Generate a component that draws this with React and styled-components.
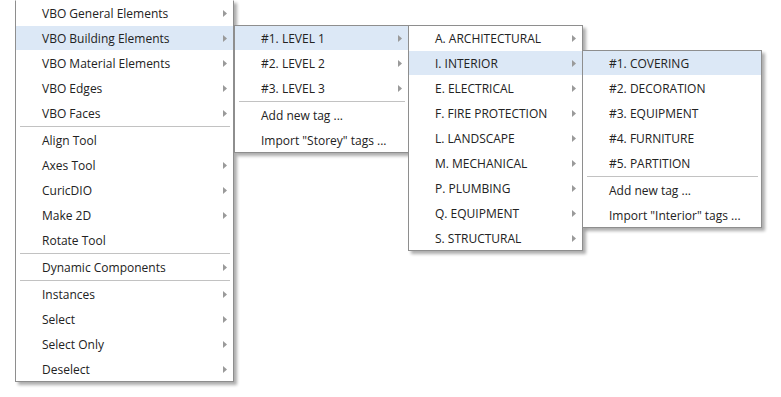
import React from "react";
import styled, { createGlobalStyle } from "styled-components";

const Global = createGlobalStyle`
  html, body { margin: 0; padding: 0; background: #ffffff; }
  body { font-family: "Open Sans", "Noto Sans", sans-serif; }
`;

const Stage = styled.div`
  position: relative;
  width: 781px;
  height: 397px;
  overflow: hidden;
  background: #ffffff;
`;

const Menu = styled.div`
  position: absolute;
  left: ${(p) => p.$left}px;
  top: ${(p) => p.$top}px;
  width: ${(p) => p.$width}px;
  box-sizing: border-box;
  display: flex;
  flex-direction: column;
  gap: 1px;
  background: #ffffff;
  border: 1px solid #8e8e8e;
  ${(p) => (p.$openTop ? "border-top-color: transparent;" : "")}
  box-shadow: 3px 3px 3px rgba(0, 0, 0, 0.32);
  z-index: ${(p) => p.$z};
`;

const Item = styled.div`
  height: 24px;
  display: flex;
  align-items: center;
  padding: 0 6px 0 26px;
  background: ${(p) => (p.$active ? "#dce8f6" : "transparent")};
  font-size: 12px;
  color: #222222;
  white-space: nowrap;
`;

const Label = styled.span`
  flex: 1;
`;

const Separator = styled.div`
  height: 1px;
  margin: 0 3px 0 4px;
  background: #c2c2c2;
`;

const Arrow = () => (
  <svg width="4" height="7" viewBox="0 0 4 7">
    <polygon points="0,0 4,3.5 0,7" fill="#9a9a9a" />
  </svg>
);

const MenuList = ({ items, ...rest }) => (
  <Menu {...rest}>
    {items.map((it, i) =>
      it === "-" ? (
        <Separator key={i} />
      ) : (
        <Item key={i} $active={it.active}>
          <Label>{it.label}</Label>
          {it.sub && <Arrow />}
        </Item>
      )
    )}
  </Menu>
);

const main = [
  { label: "VBO General Elements", sub: true },
  { label: "VBO Building Elements", sub: true, active: true },
  { label: "VBO Material Elements", sub: true },
  { label: "VBO Edges", sub: true },
  { label: "VBO Faces", sub: true },
  "-",
  { label: "Align Tool" },
  { label: "Axes Tool", sub: true },
  { label: "CuricDIO", sub: true },
  { label: "Make 2D", sub: true },
  { label: "Rotate Tool" },
  "-",
  { label: "Dynamic Components", sub: true },
  "-",
  { label: "Instances", sub: true },
  { label: "Select", sub: true },
  { label: "Select Only", sub: true },
  { label: "Deselect", sub: true },
];

const levels = [
  { label: "#1. LEVEL 1", sub: true, active: true },
  { label: "#2. LEVEL 2", sub: true },
  { label: "#3. LEVEL 3", sub: true },
  "-",
  { label: "Add new tag ..." },
  { label: 'Import "Storey" tags ...' },
];

const disciplines = [
  { label: "A. ARCHITECTURAL", sub: true },
  { label: "I. INTERIOR", sub: true, active: true },
  { label: "E. ELECTRICAL", sub: true },
  { label: "F. FIRE PROTECTION", sub: true },
  { label: "L. LANDSCAPE", sub: true },
  { label: "M. MECHANICAL", sub: true },
  { label: "P. PLUMBING", sub: true },
  { label: "Q. EQUIPMENT", sub: true },
  { label: "S. STRUCTURAL", sub: true },
];

const interior = [
  { label: "#1. COVERING", active: true },
  { label: "#2. DECORATION" },
  { label: "#3. EQUIPMENT" },
  { label: "#4. FURNITURE" },
  { label: "#5. PARTITION" },
  "-",
  { label: "Add new tag ..." },
  { label: 'Import "Interior" tags ...' },
];

export default function App() {
  return (
    <>
      <Global />
      <Stage>
        <MenuList items={main} $left={15} $top={0} $width={219} $z={1} $openTop />
        <MenuList items={levels} $left={234} $top={25} $width={175} $z={2} />
        <MenuList items={disciplines} $left={408} $top={25} $width={175} $z={3} />
        <MenuList items={interior} $left={582} $top={50} $width={180} $z={4} />
      </Stage>
    </>
  );
}
